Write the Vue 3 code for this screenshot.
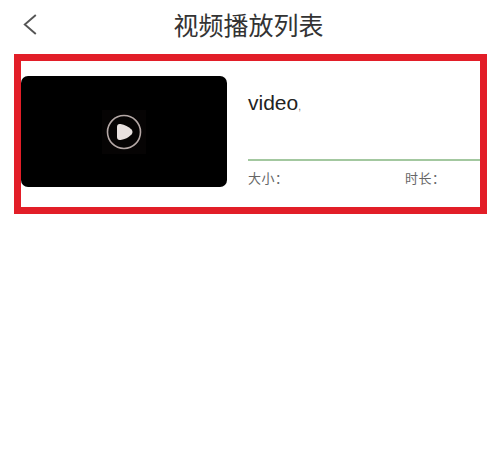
<script setup>
const title = '视频播放列表'
const video = { name: 'video', sizeLabel: '大小：', durationLabel: '时长：' }
</script>

<template>
  <div class="page">
    <header class="header">
      <svg class="back" width="14" height="24" viewBox="0 0 14 24" aria-hidden="true">
        <path d="M12.8 2 L1.8 11.5 L12.8 21" fill="none" stroke="#555" stroke-width="1.9" />
      </svg>
      <h1 class="title">{{ title }}</h1>
    </header>
    <section class="frame">
      <div class="thumb">
        <div class="glow">
          <svg width="36" height="36" viewBox="0 0 36 36" aria-hidden="true">
            <circle cx="18" cy="18" r="16.5" fill="none" stroke="#b5a8a6" stroke-width="1.6" />
            <path d="M11 13 Q11 9.5 14.5 10 Q21 11 25.5 15.5 Q27.5 18 25.5 20.5 Q21 25 14.5 26 Q11 26.5 11 23 Z" fill="#e8e1df" />
          </svg>
        </div>
      </div>
      <div class="info">
        <div class="name">{{ video.name }}<span class="dot">,</span></div>
        <div class="meta">
          <span class="size">{{ video.sizeLabel }}</span>
          <span>{{ video.durationLabel }}</span>
        </div>
      </div>
    </section>
  </div>
</template>

<style scoped>
.page {
  width: 497px;
  height: 461px;
  background: #fff;
  font-family: "Liberation Sans", "Noto Sans CJK SC", sans-serif;
  overflow: hidden;
}
.header {
  position: relative;
  height: 54px;
  display: flex;
  align-items: center;
  justify-content: center;
  box-sizing: border-box;
  padding-bottom: 3px;
}
.back {
  position: absolute;
  left: 23px;
  top: 13px;
}
.title {
  margin: 0;
  font-size: 25px;
  font-weight: 400;
  line-height: 30px;
  color: #333;
}
.frame {
  box-sizing: border-box;
  width: 473px;
  height: 160px;
  margin-left: 14px;
  border: 7px solid #e21e28;
  display: flex;
  padding-top: 15px;
}
.thumb {
  width: 206px;
  height: 111px;
  flex: none;
  background: #000;
  border-radius: 7px;
  display: flex;
  align-items: center;
  justify-content: center;
}
.glow {
  display: flex;
  padding: 4px;
  background: #060404;
}
.info {
  flex: 1;
  margin-left: 21px;
  display: flex;
  flex-direction: column;
}
.name {
  margin-top: 14px;
  height: 71px;
  box-sizing: border-box;
  border-bottom: 2px solid #a3c8a0;
  font-size: 21px;
  line-height: 26px;
  color: #222;
}
.dot {
  font-size: 10px;
  color: #777;
}
.meta {
  display: flex;
  margin-top: 9px;
  font-size: 13px;
  line-height: 18px;
  letter-spacing: 0.5px;
  color: #666;
}
.size {
  width: 157px;
}
</style>
